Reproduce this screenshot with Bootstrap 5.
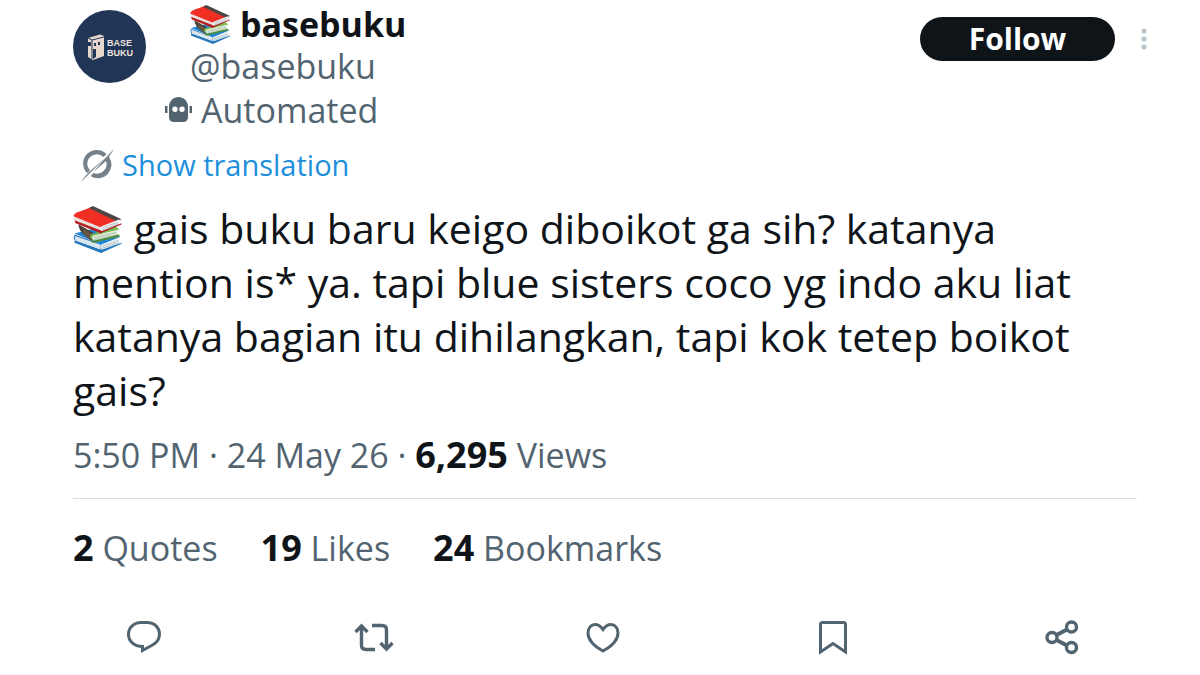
<!DOCTYPE html>
<html lang="id">
<head>
<meta charset="utf-8">
<meta name="viewport" content="width=device-width, initial-scale=1">
<title>basebuku</title>
<link href="https://cdn.jsdelivr.net/npm/bootstrap@5.3.0/dist/css/bootstrap.min.css" rel="stylesheet">
<style>
  :root { --ink: #0f1419; --muted: #536471; }
  body { font-family: "Open Sans", sans-serif; font-size: 34px; line-height: 42px; color: var(--ink); background: #fff; }
  .post { padding: 4px 63px 0 73px; }
  .muted { color: var(--muted); }
  .num { font-size: 36px; font-weight: 700; color: var(--ink); }
  .post a { text-decoration: none; color: inherit; }
  .post svg { display: block; flex: none; }
  .avatar { margin-top: 6px; }
  .who { margin-left: 44px; }
  .who h1 { font-size: 34px; line-height: 41px; font-weight: 700; gap: 9px; }
  .follow { width: 195px; height: 44px; margin-top: 13px; background: var(--ink); color: #fff; font-weight: 700; font-size: 30px; line-height: 40px; }
  .follow:hover { background: #272c30; color: #fff; }
  .more { width: 24px; height: 44px; margin: 13px -19px 0 17px; }
  .auto-tag { margin: 2px 0 0 92px; gap: 9px; }
  .post .translate { color: #1d8fdb; font-size: 29px; line-height: 40px; margin: 14px 0 0 8px; gap: 7px; }
  .message { font-size: 41px; line-height: 54px; margin: 16px 0 17px; }
  .message svg { display: inline-block; vertical-align: -9px; }
  .meta { padding-bottom: 22px; border-bottom: 1px solid #d8dfe3; }
  .stats { gap: 8px 43px; padding-top: 28px; }
  .actions { padding: 0 55px 0 51px; margin-top: 48px; }
  .actions button { width: 40px; height: 40px; color: var(--muted); }
</style>
</head>
<body>
<svg width="0" height="0" class="position-absolute" aria-hidden="true">
  <symbol id="books" viewBox="0 0 48 46">
    <path d="M1 28 28 38 28 45 3 36Q-1 32 1 28Z" fill="#1769b5"/>
    <path d="M1 29 27 38Q25 41 27 43L2 34Z" fill="#d9e6ee"/>
    <path d="M1 27 20 22 46 30 27 38Z" fill="#1e86d8"/>
    <path d="M27 38 45 31Q44 34 45 37L28 43Q25 41 27 38Z" fill="#e3edf2"/>
    <path d="M28 39.500 44 34M28 41.500 44 36" stroke="#a4b8c3" stroke-width=".7"/>
    <path d="M1 34 27 43 47 36 47 37 27 46 1 36Z" fill="#2478bd"/>
    <path d="M5 18 19 26 19 34 10 28Q5 23 5 18Z" fill="#494039"/>
    <path d="M9 22 18 27 17 34 10 28Z" fill="#665744"/>
    <path d="M17 28 41 20 45 23 19 33Q15 31 17 28Z" fill="#78b94e"/>
    <path d="M19 29 44 23Q42 26 44 29L20 34Q17 32 19 29Z" fill="#dcebd8"/>
    <path d="M20 31 42 26M20 33 43 28" stroke="#9fb3a0" stroke-width=".7"/>
    <path d="M18 34 20 34 45 28 45 30 20 36Q17 36 16 33Z" fill="#4c8d38"/>
    <path d="M1 9 27 20 27 26 2 16Q0 13 1 9Z" fill="#e8e1df"/>
    <path d="M1 14 27 24 27 27 2 17Z" fill="#b71f20"/>
    <path d="M0 10Q0 8 4 6L18 1 46 13 27 21Z" fill="#f02e24"/>
    <path d="M15 2 19 0 47 13 42 15Z" fill="#4c4543"/>
    <path d="M27 20 45 13Q43 16 45 18L28 25Q24 23 27 20Z" fill="#edf1f3"/>
    <path d="M28 21.500 43 16M28 23.500 44 17.500" stroke="#a9b1b8" stroke-width=".7"/>
    <path d="M26 27 47 18 47 17 28 24.500 26 24Z" fill="#b11c20"/>
  </symbol>
</svg>

<main class="post">
  <header class="d-flex align-items-start">
    <svg class="avatar" width="73" height="73" viewBox="0 0 73 73" role="img" aria-label="basebuku">
      <circle cx="36.500" cy="36.500" r="36.500" fill="#213557"/>
      <path d="M15 28 27 24.500 31 26 31 46 20 50 15 47Z" fill="#e6d8cd"/>
      <path d="M15 28 19 30 31 27M19 30V49" fill="none" stroke="#213557" stroke-width="1"/>
      <path d="M15 32h3v4h-3zM21 33h2v3h-2zM25 32h2v3h-2zM20 39h3v8l-3 2z" fill="#213557"/>
      <g fill="#eee5de" font-family="Liberation Sans, sans-serif" font-weight="700" font-size="9">
        <text x="34" y="36">BASE</text><text x="34" y="46">BUKU</text>
      </g>
    </svg>
    <div class="who flex-grow-1">
      <h1 class="d-flex align-items-center m-0"><svg width="41" height="39"><use href="#books"/></svg><a href="#">basebuku</a></h1>
      <a href="#" class="d-block"><span class="muted">@basebuku</span></a>
    </div>
    <button type="button" class="btn follow rounded-pill border-0 p-0">Follow</button>
    <button type="button" class="btn more border-0 p-0 d-flex align-items-center justify-content-center" aria-label="More">
      <svg width="6" height="24" viewBox="0 0 6 24" fill="#b9c6cf"><circle cx="3" cy="4" r="2.500"/><circle cx="3" cy="12" r="2.500"/><circle cx="3" cy="20" r="2.500"/></svg>
    </button>
  </header>

  <div class="auto-tag muted d-flex align-items-center">
    <svg width="27" height="26" viewBox="0 0 27 26" fill="currentColor" aria-hidden="true">
      <path fill-rule="evenodd" d="M13.500 0C18.500 0 23 4 23 10V20Q23 25 18 25H9Q4 25 4 20V10C4 4 8.500 0 13.500 0ZM10 9.500a2.700 2.700 0 1 0 0 5.400 2.700 2.700 0 0 0 0-5.400ZM17 9.500a2.700 2.700 0 1 0 0 5.400 2.700 2.700 0 0 0 0-5.400Z"/>
      <path d="M0 9h2.500v7H0zM24.500 9H27v7h-2.500z"/>
    </svg>
    <span>Automated</span>
  </div>

  <a href="#" class="translate d-flex align-items-center">
    <svg width="34" height="34" viewBox="0 0 34 34" fill="#74808a" aria-hidden="true">
      <path d="M6 25A13.500 13.500 0 0 1 25.500 6L22.500 9A9.500 9.500 0 0 0 9 22.500Z"/>
      <path d="M0 34C3 30 4 28 8 24L24 10 12 22Z"/>
      <path d="M33 1C31 5 29 6 28 9A13.500 13.500 0 0 1 9.500 28L12.500 25A9.500 9.500 0 0 0 25 13L12 24.500 22.500 12Z"/>
    </svg>
    <span>Show translation</span>
  </a>

  <p class="message"><svg width="50" height="47" role="img" aria-label="Books"><use href="#books"/></svg> gais buku baru keigo diboikot ga sih? katanya mention is* ya. tapi blue sisters coco yg indo aku liat katanya bagian itu dihilangkan, tapi kok tetep boikot gais?</p>

  <div class="meta muted">5:50 PM · 24 May 26 · <span class="num">6,295</span> Views</div>

  <div class="stats muted d-flex flex-wrap">
    <a href="#"><span class="num">2</span> Quotes</a>
    <a href="#"><span class="num">19</span> Likes</a>
    <a href="#"><span class="num">24</span> Bookmarks</a>
  </div>

  <div class="actions d-flex justify-content-between">
    <button type="button" class="btn border-0 p-0" aria-label="Reply">
      <svg width="40" height="40" viewBox="0 0 40 40" fill="none" stroke="currentColor" stroke-width="3"><path d="M17 5.500H23C30.500 5.500 35.500 10.500 35.500 17C35.500 22 33 25.500 28.500 28L18.500 33.500V29.500C10 29.500 4.500 24 4.500 17.500C4.500 10.500 10 5.500 17 5.500Z"/></svg>
    </button>
    <button type="button" class="btn border-0 p-0" aria-label="Repost">
      <svg width="40" height="40" viewBox="0 0 40 40" fill="none" stroke="currentColor" stroke-width="3.400"><path d="M1.500 15 7.500 9 13.500 15M7.500 9V28Q7.500 32.500 12 32.500H21M18 8.500H28Q32.500 8.500 32.500 13V32M26.500 26 32.500 32 38.500 26"/></svg>
    </button>
    <button type="button" class="btn border-0 p-0" aria-label="Like">
      <svg width="40" height="40" viewBox="0 0 40 40" fill="none" stroke="currentColor" stroke-width="3"><path d="M20 12.500C17 8 14 7.500 12 7.500C8 7.500 5 11 5 16C5 22 10 28.500 20 34C30 28.500 35 22 35 16C35 11 32 7.500 28 7.500C26 7.500 23 8 20 12.500Z"/></svg>
    </button>
    <button type="button" class="btn border-0 p-0" aria-label="Bookmark">
      <svg width="40" height="40" viewBox="0 0 40 40" fill="none" stroke="currentColor" stroke-width="3"><path d="M7.500 35V7.500Q7.500 5.500 9.500 5.500H30.500Q32.500 5.500 32.500 7.500V35L20 26.500Z"/></svg>
    </button>
    <button type="button" class="btn border-0 p-0" aria-label="Share">
      <svg width="40" height="40" viewBox="0 0 40 40" fill="none" stroke="currentColor" stroke-width="3.400"><circle cx="10" cy="20.500" r="5"/><circle cx="29.500" cy="10" r="5"/><circle cx="29.500" cy="30.500" r="5"/><path d="M14.500 18 25 12.500M14.500 23 25 28.500" stroke-width="4"/></svg>
    </button>
  </div>
</main>
<script src="https://cdn.jsdelivr.net/npm/bootstrap@5.3.0/dist/js/bootstrap.bundle.min.js"></script>
</body>
</html>
